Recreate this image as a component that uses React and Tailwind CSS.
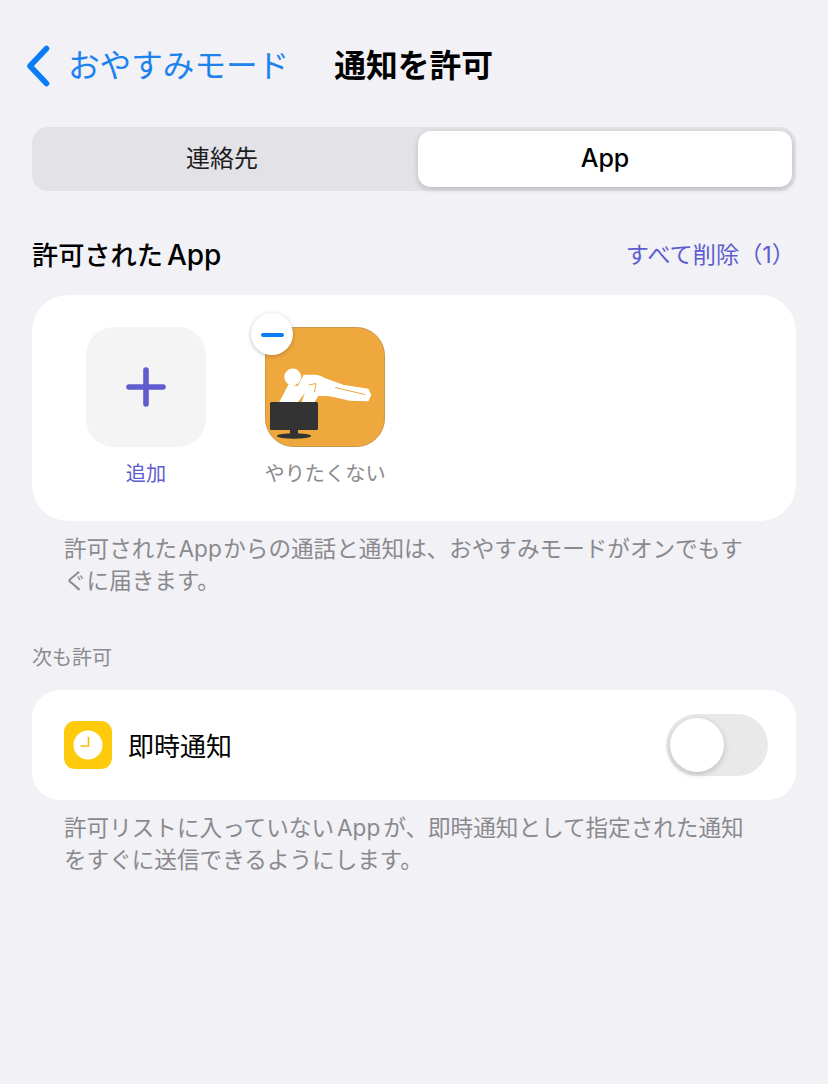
const fontStack = 'font-["Inter","Noto_Sans_CJK_JP",sans-serif]';

const AppIcon = () => (
  <svg viewBox="0 0 120 120" className="w-[120px] h-[120px] block">
    <rect x="0.5" y="0.5" width="119" height="119" rx="28" fill="#efa83e" stroke="#c99746" />
    <circle cx="27.7" cy="50" r="8.4" fill="#fff" />
    <path
      d="M15 75 L24 58 L33 60 L39 48.5 L51 48.5 Q56 49 60 52 L78 58.5 L103 62.5 L105.5 68 L103 73.5 L85 73 L65 68.5 L53 68 L49 75 L37.5 75 L42 62 L32 75 Z"
      fill="#fff"
      stroke="#fff"
      strokeWidth="1.4"
      strokeLinejoin="round"
    />
    <path d="M43.5 58 L51 56.5 L49.5 65 M70 60.5 L100 67.5" stroke="#efa83e" strokeWidth="1" fill="none" />
    <rect x="5" y="75" width="48" height="28" rx="1.5" fill="#333" />
    <rect x="25" y="103" width="8" height="5" fill="#333" />
    <ellipse cx="29" cy="109" rx="17" ry="2.7" fill="#333" />
  </svg>
);

const ClockIcon = () => (
  <div className="w-12 h-12 rounded-[11px] bg-[#fecb0c] flex items-center justify-center">
    <svg viewBox="0 0 30 30" className="w-[30px] h-[30px]">
      <circle cx="15" cy="15" r="14.5" fill="#fff" />
      <path d="M15.5 7 V16 H7.5" stroke="#f3bd0a" strokeWidth="1.6" fill="none" />
    </svg>
  </div>
);

export default function App() {
  return (
    <div className={`w-[828px] h-[1084px] overflow-hidden bg-[#f1f1f6] ${fontStack}`}>
      <div className="h-[127px] pt-[46px] flex items-start">
        <div className="h-10 w-[68px] flex items-center pl-[25px]">
          <svg viewBox="0 0 26 42" className="w-[26px] h-[42px]">
            <path
              d="M21.5 3.5 L5 21 L21.5 38.5"
              stroke="#0a7cf5"
              strokeWidth="5.6"
              strokeLinecap="round"
              strokeLinejoin="round"
              fill="none"
            />
          </svg>
        </div>
        <span className="h-10 leading-10 text-[31.6px] text-[#1c82ee]">おやすみモード</span>
        <span className="h-10 leading-10 ml-[45px] text-[31.8px] font-semibold text-black">通知を許可</span>
      </div>

      <div className="mx-8 h-16 rounded-[16px] bg-[#e2e2e7] p-1 pl-0 flex">
        <div className="w-[380px] flex items-center justify-center text-2xl text-[#1c1c1e]">連絡先</div>
        <div className="ml-[6px] flex-1 rounded-[13px] bg-white shadow-[0_2px_6px_rgba(0,0,0,0.18)] flex items-center justify-center text-[25px] font-medium text-black">
          App
        </div>
      </div>

      <div className="mx-8 mt-[44px] h-10 flex items-center justify-between">
        <span className="text-[26.2px] font-medium text-black">
          許可された<span className="ml-[4px] text-[28px]">App</span>
        </span>
        <span className="text-[23.2px] text-[#5e5ccf] pr-[1px]">すべて削除（1）</span>
      </div>

      <div className="mx-8 mt-5 h-[226px] rounded-[36px] bg-white pt-8 pl-[54px] flex gap-[59px]">
        <div className="w-[120px] flex flex-col items-center">
          <div className="w-[120px] h-[120px] rounded-[28px] bg-[#f4f4f4] flex items-center justify-center">
            <svg viewBox="0 0 40 40" className="w-10 h-10">
              <path d="M20 3 V37 M3 20 H37" stroke="#5e5ccf" strokeWidth="5.6" strokeLinecap="round" />
            </svg>
          </div>
          <span className="mt-[13px] text-[20.2px] leading-7 text-[#5e5ccf]">追加</span>
        </div>
        <div className="w-[120px] flex flex-col items-center relative">
          <AppIcon />
          <div className="absolute -left-[14px] -top-[14px] w-[42px] h-[42px] rounded-full bg-white shadow-[0_1px_4px_rgba(0,0,0,0.25)] flex items-center justify-center">
            <div className="w-[23px] h-[4px] mt-[2px] rounded-full bg-[#0a7cf5]" />
          </div>
          <span className="mt-[13px] text-[20.2px] leading-7 whitespace-nowrap text-[#8a8a8e]">やりたくない</span>
        </div>
      </div>

      <p className="mt-3 ml-[64px] whitespace-nowrap text-[22.6px] leading-8 text-[#8a8a8e]">
        許可された<span className="mx-[1.5px]">App</span>からの通話と通知は、おやすみモードがオンでもす
        <br />
        ぐに届きます。
      </p>

      <div className="mt-[47px] ml-8 text-[20px] leading-7 text-[#8a8a8e]">次も許可</div>

      <div className="mx-8 mt-[18px] h-[110px] rounded-[28px] bg-white pl-8 pr-7 flex items-center">
        <ClockIcon />
        <span className="ml-[16px] pt-[2px] text-[26px] text-black">即時通知</span>
        <div className="ml-auto w-[102px] h-[62px] rounded-full bg-[#e9e9ea] p-1">
          <div className="w-[54px] h-[54px] rounded-full bg-white shadow-[0_2px_6px_rgba(0,0,0,0.2)]" />
        </div>
      </div>

      <p className="mt-3 ml-[64px] whitespace-nowrap text-[22.6px] leading-8 text-[#8a8a8e]">
        許可リストに入っていない<span className="mx-[3px]">App</span>が、即時通知として指定された通知
        <br />
        をすぐに送信できるようにします。
      </p>
    </div>
  );
}
